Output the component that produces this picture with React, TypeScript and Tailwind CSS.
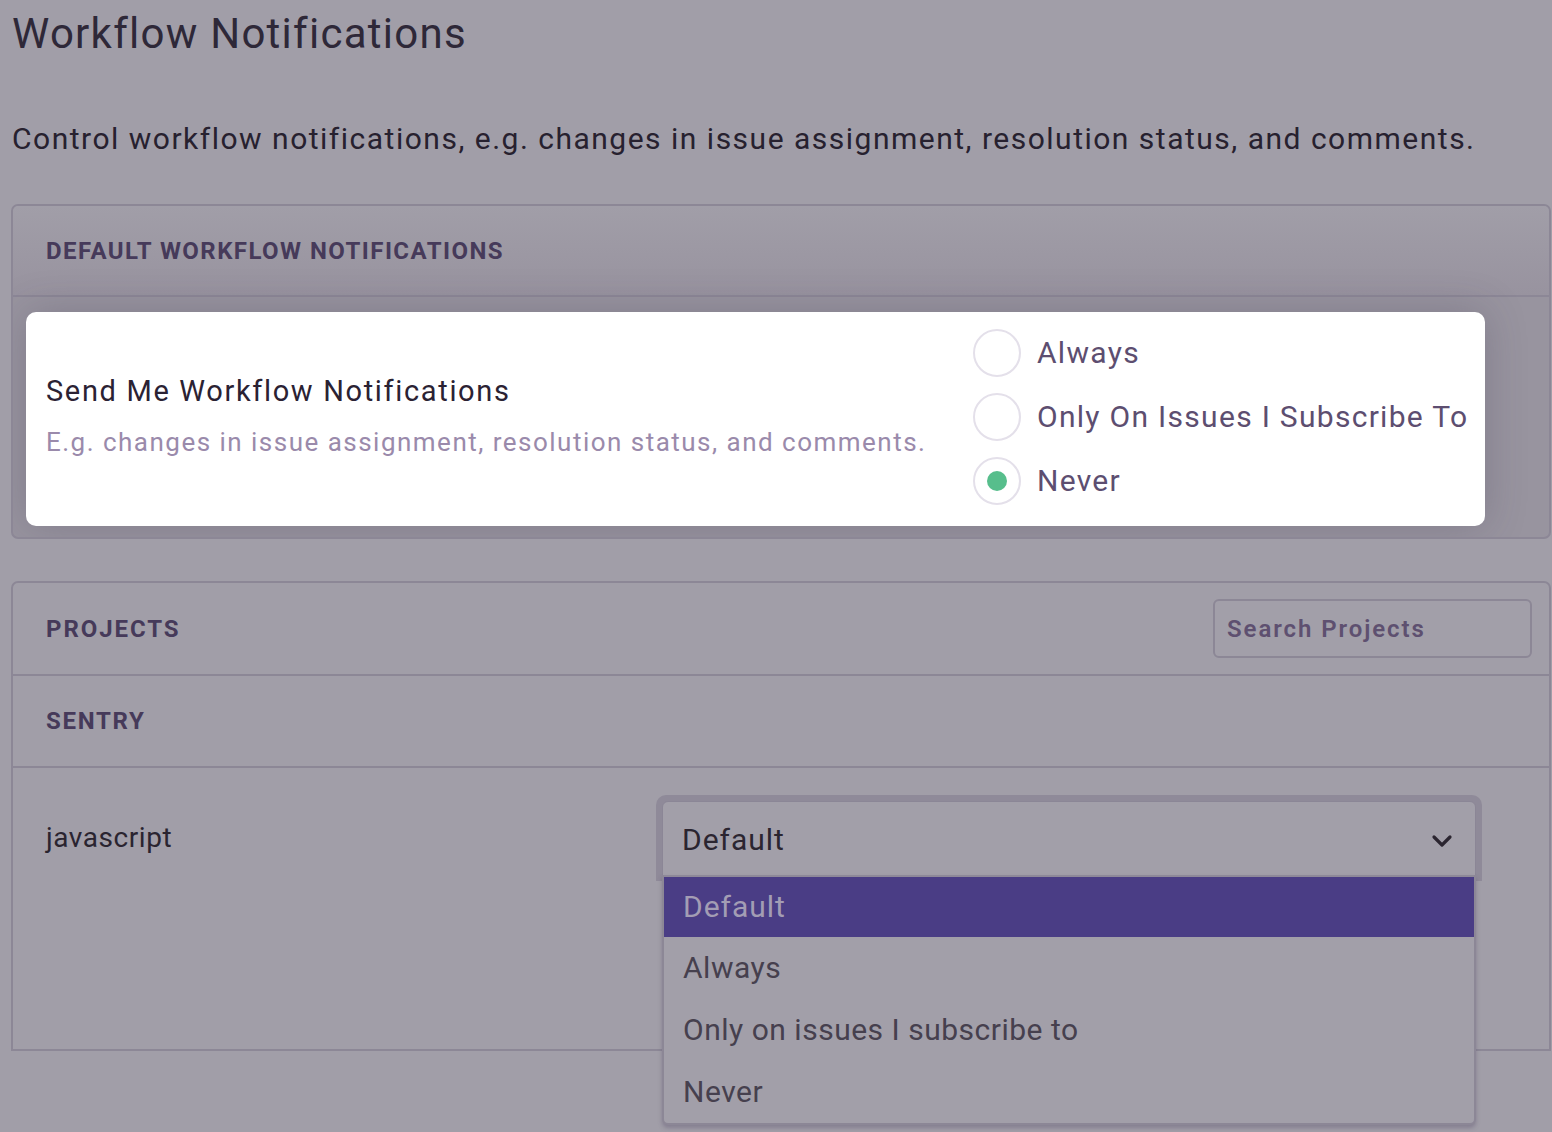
import React from "react";

const font = { fontFamily: "Roboto, 'Noto Sans', sans-serif" };

function Radio({ label, checked }: { label: string; checked?: boolean }) {
  return (
    <div className="flex items-center h-[64px]">
      <div className="w-[48px] h-[48px] rounded-full border-2 border-[#e4e0ea] flex items-center justify-center bg-white">
        {checked && <div className="w-[20px] h-[20px] rounded-full bg-[#57be8c]" />}
      </div>
      <span className="ml-[16px] text-[30px] tracking-[0.043em] text-[#5d4e70] leading-none">{label}</span>
    </div>
  );
}

export default function App() {
  return (
    <div style={font} className="w-[1552px] h-[1132px] overflow-hidden bg-[#a19ea8] relative">
      <div className="pl-[12px]">
        <h1 className="text-[42px] leading-none tracking-[0.03em] text-[#2e2838] pt-[13px]">Workflow Notifications</h1>
        <p className="text-[30px] leading-none tracking-[0.05em] text-[#27212f] mt-[69px]">
          Control workflow notifications, e.g. changes in issue assignment, resolution status, and comments.
        </p>
      </div>

      {/* Panel 1 */}
      <div className="ml-[11px] mt-[50px] w-[1540px] h-[335px] rounded-[7px] border-2 border-[#8c8796] bg-[#98949f] overflow-hidden">
        <div className="h-[91px] bg-gradient-to-b from-[#a19ea8] to-[#98939f] border-b-2 border-[#8c8796] flex items-center pl-[33px]">
          <span className="text-[24px] font-bold tracking-[0.06em] text-[#463a5a] uppercase">Default Workflow Notifications</span>
        </div>
        <div className="pt-[15px] pl-[13px]">
          <div className="w-[1459px] h-[214px] bg-white rounded-[10px] shadow-[0_0_40px_rgba(60,50,80,0.25)] flex items-center">
            <div className="pl-[20px] flex-1">
              <div className="text-[29px] tracking-[0.057em] text-[#2b2233] leading-none -mt-[6px]">Send Me Workflow Notifications</div>
              <div className="text-[26px] tracking-[0.057em] text-[#9a8aab] leading-none mt-[23px]">
                E.g. changes in issue assignment, resolution status, and comments.
              </div>
            </div>
            <div className="w-[512px] flex flex-col justify-center pb-[4px]">
              <Radio label="Always" />
              <Radio label="Only On Issues I Subscribe To" />
              <Radio label="Never" checked />
            </div>
          </div>
        </div>
      </div>

      {/* Panel 2 */}
      <div className="ml-[11px] mt-[42px] w-[1540px] h-[470px] rounded-t-[7px] border-2 border-[#8c8796] bg-[#a19ea8]">
        <div className="h-[93px] border-b-2 border-[#8c8796] flex items-center justify-between pl-[33px] pr-[17px]">
          <span className="text-[24px] font-bold tracking-[0.08em] text-[#463a5a]">PROJECTS</span>
          <div className="w-[319px] h-[59px] rounded-[6px] border-2 border-[#8c8796] bg-[#a29fa9] flex items-center pl-[12px]">
            <span className="text-[24px] font-semibold tracking-[0.08em] text-[#5e5070]">Search Projects</span>
          </div>
        </div>
        <div className="h-[92px] border-b-2 border-[#8c8796] flex items-center pl-[33px]">
          <span className="text-[24px] font-bold tracking-[0.07em] text-[#463a5a]">SENTRY</span>
        </div>
        <div className="flex pl-[33px] pt-[27px]">
          <div className="w-[610px] pt-[29px] text-[28px] tracking-[0.02em] leading-none text-[#2a2430]">javascript</div>
          <div className="relative">
            <div className="w-[826px] h-[86px] rounded-t-[10px] bg-[#8f8a99] p-[6px] pb-0">
              <div className="w-[814px] h-[80px] rounded-t-[6px] border border-[#8b8696] bg-[#a29fa9] flex items-center justify-between pl-[19px] pr-[22px]">
                <span className="text-[30px] tracking-[0.033em] text-[#2b2530] leading-none -mt-[2px]">Default</span>
                <svg width="22" height="14" viewBox="0 0 22 14" fill="none">
                  <path d="M3 3 L11 11 L19 3" stroke="#2b2530" strokeWidth="3.2" strokeLinecap="round" strokeLinejoin="round" />
                </svg>
              </div>
            </div>
            <div className="absolute left-[6px] top-[80px] w-[814px] h-[250px] border-2 border-t-0 border-[#8c8796] rounded-b-[6px] bg-[#a29fa9] shadow-[0_3px_4px_rgba(80,70,100,0.35)] z-10">
              <div className="h-[2px] bg-[#8e8999]" />
              <div className="h-[60px] bg-[#4a3d85] flex items-center pl-[19px]">
                <span className="text-[30px] tracking-[0.033em] text-[#a39db4] leading-none">Default</span>
              </div>
              {["Always", "Only on issues I subscribe to", "Never"].map((o) => (
                <div key={o} className="h-[62px] flex items-center pl-[19px]">
                  <span className="text-[30px] tracking-[0.017em] text-[#46404e] leading-none">{o}</span>
                </div>
              ))}
            </div>
          </div>
        </div>
      </div>
    </div>
  );
}
